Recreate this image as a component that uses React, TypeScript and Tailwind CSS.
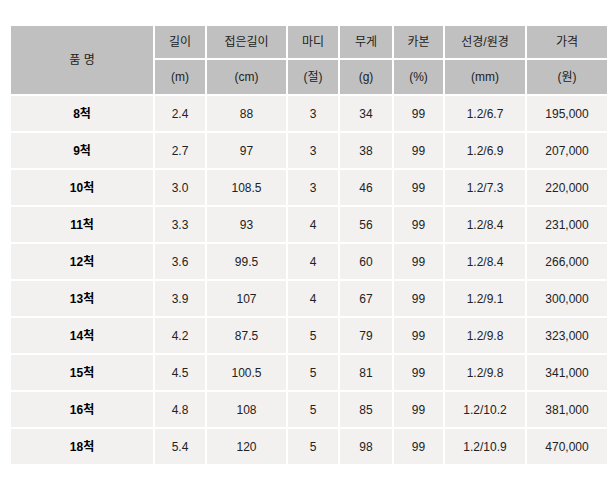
import React from 'react';

const rows = [
  ['8척', '2.4', '88', '3', '34', '99', '1.2/6.7', '195,000'],
  ['9척', '2.7', '97', '3', '38', '99', '1.2/6.9', '207,000'],
  ['10척', '3.0', '108.5', '3', '46', '99', '1.2/7.3', '220,000'],
  ['11척', '3.3', '93', '4', '56', '99', '1.2/8.4', '231,000'],
  ['12척', '3.6', '99.5', '4', '60', '99', '1.2/8.4', '266,000'],
  ['13척', '3.9', '107', '4', '67', '99', '1.2/9.1', '300,000'],
  ['14척', '4.2', '87.5', '5', '79', '99', '1.2/9.8', '323,000'],
  ['15척', '4.5', '100.5', '5', '81', '99', '1.2/9.8', '341,000'],
  ['16척', '4.8', '108', '5', '85', '99', '1.2/10.2', '381,000'],
  ['18척', '5.4', '120', '5', '98', '99', '1.2/10.9', '470,000'],
];

const heads = ['길이', '접은길이', '마디', '무게', '카본', '선경/원경', '가격'];
const units = ['(m)', '(cm)', '(절)', '(g)', '(%)', '(mm)', '(원)'];

export default function App() {
  return (
    <div className="w-[609px] h-[477px] bg-white pt-[24px] pl-[9px]">
      <table
        className="table-fixed border-separate border-spacing-[2px] text-[12px] text-[#222] text-center"
        style={{ fontFamily: '"Liberation Sans", "Noto Sans CJK KR", sans-serif' }}
      >
        <colgroup>
          <col className="w-[142px]" />
          <col className="w-[50px]" />
          <col className="w-[79px]" />
          <col className="w-[50px]" />
          <col className="w-[52px]" />
          <col className="w-[49px]" />
          <col className="w-[80px]" />
          <col className="w-[80px]" />
        </colgroup>
        <thead>
          <tr className="h-[32px]">
            <th rowSpan={2} className="bg-[#c0c0c0] font-normal p-0">품 명</th>
            {heads.map((h) => (
              <th key={h} className="bg-[#c0c0c0] font-normal p-0">{h}</th>
            ))}
          </tr>
          <tr className="h-[34px]">
            {units.map((u) => (
              <th key={u} className="bg-[#c0c0c0] font-normal p-0">{u}</th>
            ))}
          </tr>
        </thead>
        <tbody>
          {rows.map((r) => (
            <tr key={r[0]} className="h-[35px]">
              {r.map((c, i) => (
                <td key={i} className={`bg-[#f2f1f0] p-0 ${i === 0 ? 'font-bold text-black' : ''}`}>
                  {c}
                </td>
              ))}
            </tr>
          ))}
        </tbody>
      </table>
    </div>
  );
}
